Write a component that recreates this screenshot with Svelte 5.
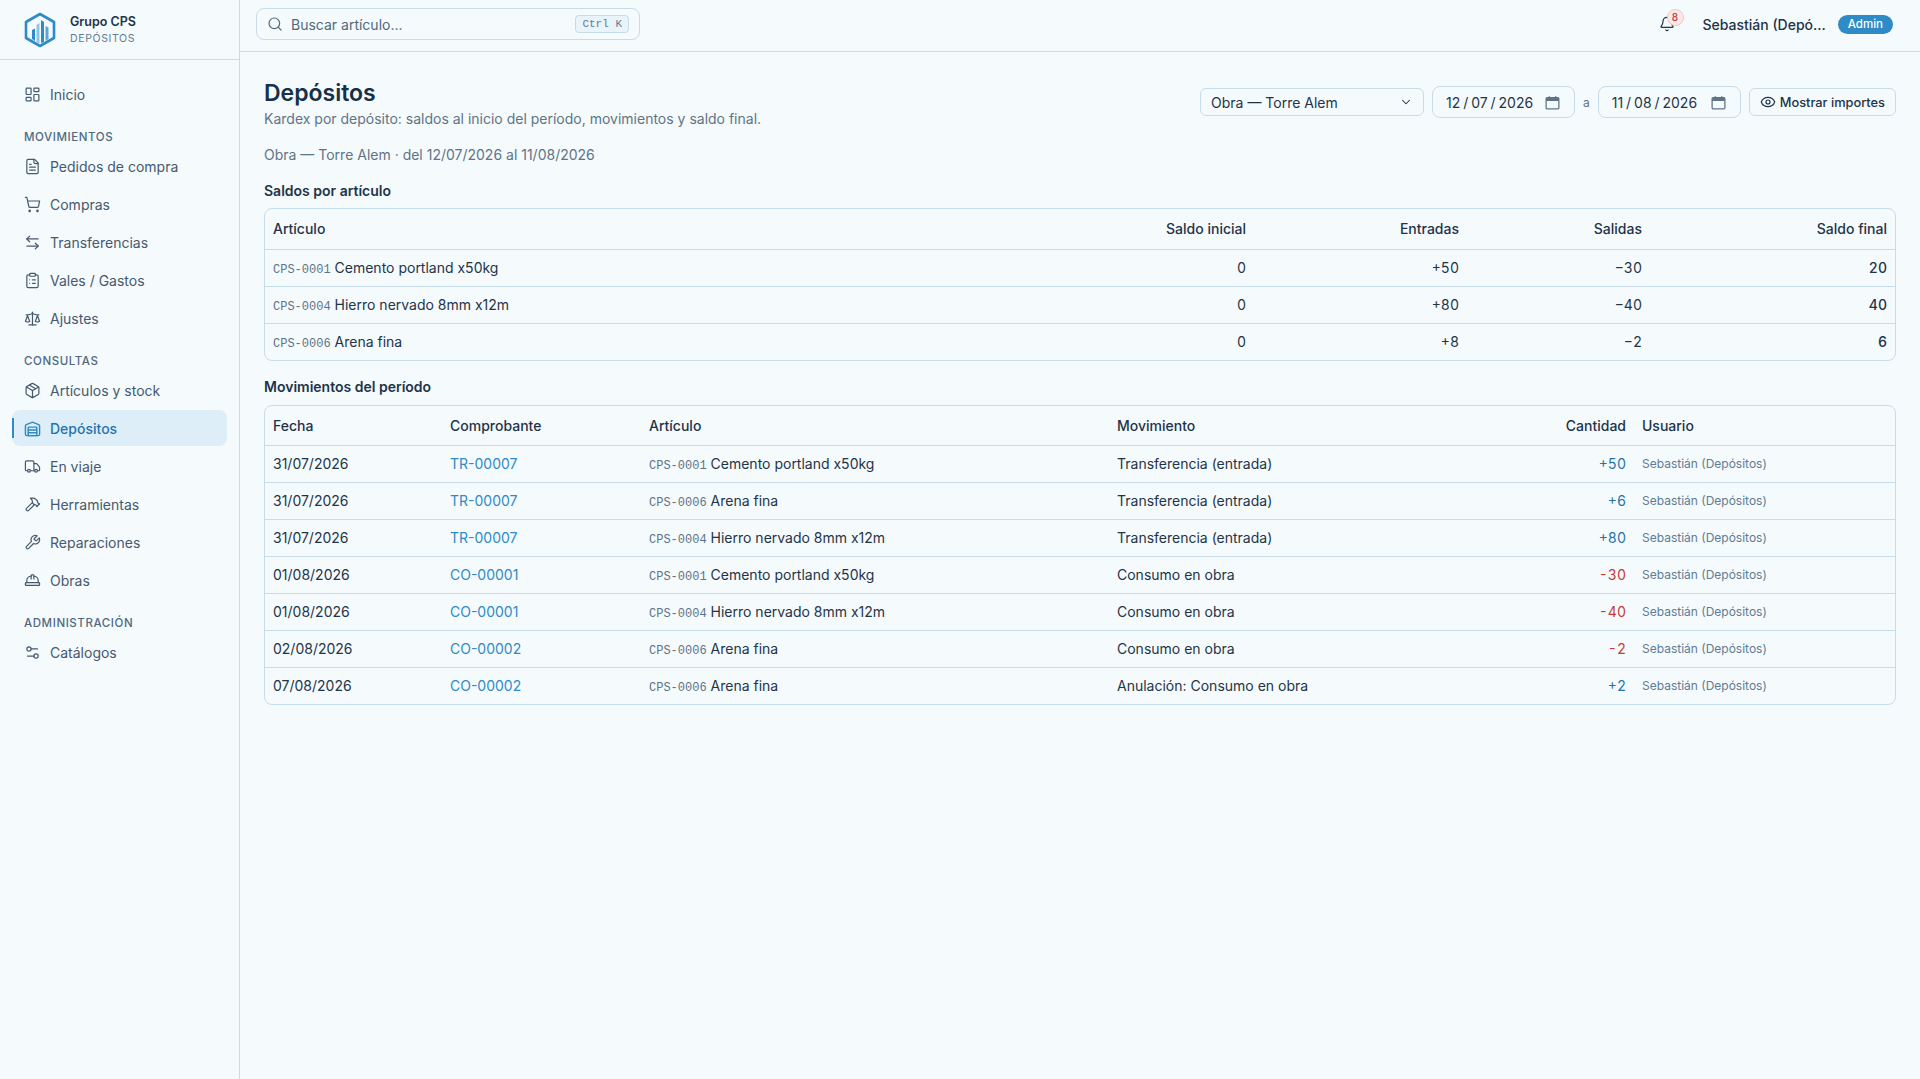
<script>
  const icons = {
    dash: '<rect x="3" y="3" width="7" height="9" rx="1"/><rect x="14" y="3" width="7" height="5" rx="1"/><rect x="14" y="12" width="7" height="9" rx="1"/><rect x="3" y="16" width="7" height="5" rx="1"/>',
    file: '<path d="M15 2H6a2 2 0 0 0-2 2v16a2 2 0 0 0 2 2h12a2 2 0 0 0 2-2V7Z"/><path d="M14 2v4a2 2 0 0 0 2 2h4"/><path d="M10 9H8"/><path d="M16 13H8"/><path d="M16 17H8"/>',
    cart: '<circle cx="8" cy="21" r="1"/><circle cx="19" cy="21" r="1"/><path d="M2.05 2.05h2l2.66 12.42a2 2 0 0 0 2 1.58h9.78a2 2 0 0 0 1.95-1.57l1.65-7.43H5.12"/>',
    swap: '<path d="M8 3 4 7l4 4"/><path d="M4 7h16"/><path d="m16 21 4-4-4-4"/><path d="M20 17H4"/>',
    clip: '<rect x="8" y="2" width="8" height="4" rx="1"/><path d="M16 4h2a2 2 0 0 1 2 2v14a2 2 0 0 1-2 2H6a2 2 0 0 1-2-2V6a2 2 0 0 1 2-2h2"/><path d="M12 11h4"/><path d="M12 16h4"/><path d="M8 11h.01"/><path d="M8 16h.01"/>',
    scale: '<path d="m16 16 3-8 3 8c-.87.65-1.92 1-3 1s-2.13-.35-3-1Z"/><path d="m2 16 3-8 3 8c-.87.65-1.92 1-3 1s-2.13-.35-3-1Z"/><path d="M7 21h10"/><path d="M12 3v18"/><path d="M3 7h2c2 0 5-1 7-2 2 1 5 2 7 2h2"/>',
    box: '<path d="m7.5 4.27 9 5.15"/><path d="M21 8a2 2 0 0 0-1-1.73l-7-4a2 2 0 0 0-2 0l-7 4A2 2 0 0 0 3 8v8a2 2 0 0 0 1 1.73l7 4a2 2 0 0 0 2 0l7-4A2 2 0 0 0 21 16Z"/><path d="m3.3 7 8.7 5 8.7-5"/><path d="M12 22V12"/>',
    store: '<path d="M22 8.35V20a2 2 0 0 1-2 2H4a2 2 0 0 1-2-2V8.35A2 2 0 0 1 3.26 6.5l8-3.2a2 2 0 0 1 1.48 0l8 3.2A2 2 0 0 1 22 8.35Z"/><path d="M6 18h12"/><path d="M6 14h12"/><rect x="6" y="10" width="12" height="12"/>',
    truck: '<path d="M14 18V6a2 2 0 0 0-2-2H4a2 2 0 0 0-2 2v11a1 1 0 0 0 1 1h2"/><path d="M15 18H9"/><path d="M19 18h2a1 1 0 0 0 1-1v-3.65a1 1 0 0 0-.22-.624l-3.48-4.35A1 1 0 0 0 17.52 8H14"/><circle cx="17" cy="18" r="2"/><circle cx="7" cy="18" r="2"/>',
    hammer: '<path d="m15 12-8.373 8.373a1 1 0 1 1-3-3L12 9"/><path d="m18 15 4-4"/><path d="m21.5 11.5-1.914-1.914A2 2 0 0 1 19 8.172V7l-2.26-2.26a6 6 0 0 0-4.202-1.756L9 2.96l.92.82A6.18 6.18 0 0 1 12 8.4V10l2 2h1.172a2 2 0 0 1 1.414.586L18.5 14.5"/>',
    wrench: '<path d="M14.7 6.3a1 1 0 0 0 0 1.4l1.6 1.6a1 1 0 0 0 1.4 0l3.77-3.77a6 6 0 0 1-7.94 7.94l-6.91 6.91a2.12 2.12 0 0 1-3-3l6.91-6.91a6 6 0 0 1 7.94-7.94l-3.76 3.76z"/>',
    hat: '<path d="M10 10V5a1 1 0 0 1 1-1h2a1 1 0 0 1 1 1v5"/><path d="M14 6a6 6 0 0 1 6 6v3"/><path d="M4 15v-3a6 6 0 0 1 6-6"/><rect x="2" y="15" width="20" height="4" rx="1"/>',
    sliders: '<path d="M14 17H5"/><path d="M19 7h-9"/><circle cx="17" cy="17" r="3"/><circle cx="7" cy="7" r="3"/>',
  };

  const nav = [
    { items: [{ label: "Inicio", icon: "dash" }] },
    {
      title: "Movimientos",
      items: [
        { label: "Pedidos de compra", icon: "file" },
        { label: "Compras", icon: "cart" },
        { label: "Transferencias", icon: "swap" },
        { label: "Vales / Gastos", icon: "clip" },
        { label: "Ajustes", icon: "scale" },
      ],
    },
    {
      title: "Consultas",
      items: [
        { label: "Artículos y stock", icon: "box" },
        { label: "Depósitos", icon: "store", active: true },
        { label: "En viaje", icon: "truck" },
        { label: "Herramientas", icon: "hammer" },
        { label: "Reparaciones", icon: "wrench" },
        { label: "Obras", icon: "hat" },
      ],
    },
    { title: "Administración", items: [{ label: "Catálogos", icon: "sliders" }] },
  ];

  const saldos = [
    { code: "CPS-0001", name: "Cemento portland x50kg", ini: "0", ent: "+50", sal: "−30", fin: "20" },
    { code: "CPS-0004", name: "Hierro nervado 8mm x12m", ini: "0", ent: "+80", sal: "−40", fin: "40" },
    { code: "CPS-0006", name: "Arena fina", ini: "0", ent: "+8", sal: "−2", fin: "6" },
  ];

  const user = "Sebastián (Depósitos)";
  const movs = [
    { date: "31/07/2026", doc: "TR-00007", code: "CPS-0001", name: "Cemento portland x50kg", mov: "Transferencia (entrada)", qty: "+50" },
    { date: "31/07/2026", doc: "TR-00007", code: "CPS-0006", name: "Arena fina", mov: "Transferencia (entrada)", qty: "+6" },
    { date: "31/07/2026", doc: "TR-00007", code: "CPS-0004", name: "Hierro nervado 8mm x12m", mov: "Transferencia (entrada)", qty: "+80" },
    { date: "01/08/2026", doc: "CO-00001", code: "CPS-0001", name: "Cemento portland x50kg", mov: "Consumo en obra", qty: "-30" },
    { date: "01/08/2026", doc: "CO-00001", code: "CPS-0004", name: "Hierro nervado 8mm x12m", mov: "Consumo en obra", qty: "-40" },
    { date: "02/08/2026", doc: "CO-00002", code: "CPS-0006", name: "Arena fina", mov: "Consumo en obra", qty: "-2" },
    { date: "07/08/2026", doc: "CO-00002", code: "CPS-0006", name: "Arena fina", mov: "Anulación: Consumo en obra", qty: "+2" },
  ];
</script>

<div class="shell">
  <aside class="sidebar">
    <div class="brand">
      <svg class="logo" viewBox="0 0 32 36" width="32" height="36" aria-hidden="true">
        <path d="M16 2 30 10v16L16 34 2 26V10Z" fill="none" stroke="#2e8bc5" stroke-width="2.6" stroke-linejoin="round" />
        <path d="M8 27V18l3-1.5V29Z" fill="#2e8bc5" />
        <path d="M12.5 30V13l3-2v20.5Z" fill="#8cc3e6" />
        <path d="M17 31V8l3 2v20Z" fill="#2e8bc5" />
        <path d="M21.5 29V14l3 1.5V27Z" fill="#5ba6d6" />
      </svg>
      <div>
        <div class="brand-name">Grupo CPS</div>
        <div class="brand-sub">DEPÓSITOS</div>
      </div>
    </div>
    <nav class="nav">
      {#each nav as group}
        {#if group.title}
          <div class="nav-title">{group.title}</div>
        {/if}
        {#each group.items as item}
          <div class="nav-item" class:active={item.active}>
            <svg class="nav-icon" viewBox="0 0 24 24" width="17" height="17" aria-hidden="true">{@html icons[item.icon]}</svg>
            <span>{item.label}</span>
          </div>
        {/each}
      {/each}
    </nav>
  </aside>

  <div class="content">
    <header class="topbar">
      <div class="search">
        <svg class="stroke" viewBox="0 0 24 24" width="16" height="16" aria-hidden="true"><path d="m21 21-4.34-4.34" /><circle cx="11" cy="11" r="8" /></svg>
        <span class="search-text">Buscar artículo...</span>
        <kbd>Ctrl K</kbd>
      </div>
      <div class="top-right">
        <div class="bell">
          <svg class="stroke" viewBox="0 0 24 24" width="16" height="16" aria-hidden="true"><path d="M10.268 21a2 2 0 0 0 3.464 0" /><path d="M3.262 15.326A1 1 0 0 0 4 17h16a1 1 0 0 0 .74-1.673C19.41 13.956 18 12.499 18 8A6 6 0 0 0 6 8c0 4.499-1.411 5.956-2.738 7.326" /></svg>
          <span class="bell-count">8</span>
        </div>
        <span class="user">Sebastián (Depó...</span>
        <span class="role">Admin</span>
      </div>
    </header>

    <main class="page">
      <div class="page-head">
        <div>
          <h1>Depósitos</h1>
          <p class="lead">Kardex por depósito: saldos al inicio del período, movimientos y saldo final.</p>
        </div>
        <div class="filters">
          <div class="select">
            <span>Obra — Torre Alem</span>
            <svg class="stroke" viewBox="0 0 24 24" width="14" height="14" aria-hidden="true"><path d="m6 9 6 6 6-6" /></svg>
          </div>
          <div class="date">
            <span>12 / 07 / 2026</span>
            <svg viewBox="0 0 16 16" width="17" height="17" aria-hidden="true"><path d="M3 3.5h10a1 1 0 0 1 1 1V13a1 1 0 0 1-1 1H3a1 1 0 0 1-1-1V4.5a1 1 0 0 1 1-1Z" fill="none" stroke="#5f7486" stroke-width="1.2" /><path d="M2 4.5a1 1 0 0 1 1-1h10a1 1 0 0 1 1 1V6.5H2Z" fill="#5f7486" /><path d="M5 2v2M11 2v2" stroke="#5f7486" stroke-width="1.3" /></svg>
          </div>
          <span class="sep">a</span>
          <div class="date">
            <span>11 / 08 / 2026</span>
            <svg viewBox="0 0 16 16" width="17" height="17" aria-hidden="true"><path d="M3 3.5h10a1 1 0 0 1 1 1V13a1 1 0 0 1-1 1H3a1 1 0 0 1-1-1V4.5a1 1 0 0 1 1-1Z" fill="none" stroke="#5f7486" stroke-width="1.2" /><path d="M2 4.5a1 1 0 0 1 1-1h10a1 1 0 0 1 1 1V6.5H2Z" fill="#5f7486" /><path d="M5 2v2M11 2v2" stroke="#5f7486" stroke-width="1.3" /></svg>
          </div>
          <button class="btn" type="button">
            <svg class="stroke" viewBox="0 0 24 24" width="16" height="16" aria-hidden="true"><path d="M2.062 12.348a1 1 0 0 1 0-.696 10.75 10.75 0 0 1 19.876 0 1 1 0 0 1 0 .696 10.75 10.75 0 0 1-19.876 0" /><circle cx="12" cy="12" r="3" /></svg>
            Mostrar importes
          </button>
        </div>
      </div>

      <p class="context">Obra — Torre Alem · del 12/07/2026 al 11/08/2026</p>

      <h2>Saldos por artículo</h2>
      <div class="table-wrap">
        <table class="saldos">
          <colgroup><col style="width:640px" /><col style="width:349px" /><col style="width:213px" /><col style="width:183px" /><col style="width:245px" /></colgroup>
          <thead>
            <tr><th>Artículo</th><th class="num">Saldo inicial</th><th class="num">Entradas</th><th class="num">Salidas</th><th class="num">Saldo final</th></tr>
          </thead>
          <tbody>
            {#each saldos as row}
              <tr>
                <td><span class="code">{row.code}</span> {row.name}</td>
                <td class="num">{row.ini}</td>
                <td class="num">{row.ent}</td>
                <td class="num">{row.sal}</td>
                <td class="num strong">{row.fin}</td>
              </tr>
            {/each}
          </tbody>
        </table>
      </div>

      <h2 class="second">Movimientos del período</h2>
      <div class="table-wrap">
        <table class="movs">
          <colgroup><col style="width:177px" /><col style="width:199px" /><col style="width:468px" /><col style="width:360px" /><col style="width:165px" /><col style="width:261px" /></colgroup>
          <thead>
            <tr><th>Fecha</th><th>Comprobante</th><th>Artículo</th><th>Movimiento</th><th class="num">Cantidad</th><th>Usuario</th></tr>
          </thead>
          <tbody>
            {#each movs as row}
              <tr>
                <td>{row.date}</td>
                <td class="link">{row.doc}</td>
                <td><span class="code">{row.code}</span> {row.name}</td>
                <td>{row.mov}</td>
                <td class="num" class:neg={row.qty.startsWith("-")} class:pos={row.qty.startsWith("+")}>{row.qty}</td>
                <td class="who">{user}</td>
              </tr>
            {/each}
          </tbody>
        </table>
      </div>
    </main>
  </div>
</div>

<style>
  :global(body) {
    margin: 0;
    background: #f5fafd;
    font-family: Inter, "Noto Sans", sans-serif;
    color: #1e3448;
  }
  .shell {
    display: flex;
    min-height: 1079px;
  }
  .sidebar {
    width: 239px;
    flex: none;
    border-right: 1px solid #c7dcea;
  }
  .brand {
    height: 59px;
    display: flex;
    align-items: center;
    gap: 14px;
    padding-left: 24px;
    border-bottom: 1px solid #c7dcea;
  }
  .brand-name {
    font-size: 12.5px;
    font-weight: 600;
    line-height: 17px;
  }
  .brand-sub {
    font-size: 10.5px;
    letter-spacing: 0.06em;
    color: #5f7c93;
    line-height: 17px;
  }
  .nav {
    padding: 16px 12px;
  }
  .nav-title {
    margin: 17px 0 3px;
    padding-left: 12px;
    font-size: 11.5px;
    font-weight: 500;
    letter-spacing: 0.05em;
    line-height: 16px;
    color: #4f6a80;
    text-transform: uppercase;
  }
  .nav-item {
    position: relative;
    height: 36px;
    margin-bottom: 2px;
    display: flex;
    align-items: center;
    gap: 9px;
    padding-left: 12px;
    border-radius: 8px;
    font-size: 14px;
    color: #46596d;
  }
  .nav-icon {
    fill: none;
    stroke: currentColor;
    stroke-width: 1.7;
    stroke-linecap: round;
    stroke-linejoin: round;
  }
  .nav-item.active {
    background: #deeef8;
    color: #1f74ad;
    font-weight: 500;
  }
  .nav-item.active .nav-icon {
    color: #2e8bc5;
    stroke-width: 2;
  }
  .nav-item.active::before {
    content: "";
    position: absolute;
    left: 0;
    top: 8px;
    bottom: 8px;
    width: 2px;
    background: #2e8bc5;
  }
  .content {
    flex: 1;
    min-width: 0;
  }
  .topbar {
    height: 48px;
    display: flex;
    align-items: center;
    justify-content: space-between;
    padding: 0 27px 3px 16px;
    border-bottom: 1px solid #c7dcea;
  }
  .search {
    width: 384px;
    height: 32px;
    box-sizing: border-box;
    display: flex;
    align-items: center;
    gap: 8px;
    padding: 0 10px;
    border: 1px solid #c7dcea;
    border-radius: 8px;
    color: #4f6a80;
  }
  .search-text {
    flex: 1;
    font-size: 14px;
  }
  kbd {
    font-family: "Liberation Mono", monospace;
    font-size: 11px;
    color: #5f7c93;
    background: #e9f3fa;
    border: 1px solid #c7dcea;
    border-radius: 4px;
    padding: 2px 6px;
  }
  .stroke {
    fill: none;
    stroke: currentColor;
    stroke-width: 1.8;
    stroke-linecap: round;
    stroke-linejoin: round;
  }
  .top-right {
    display: flex;
    align-items: center;
  }
  .bell {
    position: relative;
    display: flex;
    margin-right: 28px;
    color: #1e3448;
  }
  .bell-count {
    position: absolute;
    top: -7px;
    left: 8px;
    width: 17px;
    height: 17px;
    box-sizing: border-box;
    border: 1px solid #f0c4c2;
    border-radius: 50%;
    background: #fde8e7;
    color: #c53a36;
    font-size: 10px;
    font-weight: 500;
    line-height: 15px;
    text-align: center;
  }
  .user {
    font-size: 14px;
    font-weight: 500;
    margin-right: 12px;
  }
  .role {
    background: #2e8bc5;
    color: #fff;
    border-radius: 10px;
    font-size: 11.5px;
    font-weight: 500;
    line-height: 19px;
    padding: 0 10px;
  }
  .page {
    padding: 27px 24px 24px;
  }
  .page-head {
    display: flex;
    justify-content: space-between;
    align-items: flex-start;
  }
  h1 {
    margin: 0;
    font-size: 23px;
    font-weight: 600;
    line-height: 28px;
    color: #16304a;
  }
  .lead {
    margin: 2px 0 0;
    font-size: 14px;
    line-height: 20px;
    color: #5f7486;
  }
  .filters {
    display: flex;
    align-items: center;
    gap: 8px;
    margin-top: 7px;
    font-size: 14px;
  }
  .select {
    width: 224px;
    height: 28px;
    box-sizing: border-box;
    display: flex;
    align-items: center;
    justify-content: space-between;
    padding: 0 10px;
    border: 1px solid #c7dcea;
    border-radius: 6px;
    color: #1e3448;
  }
  .date {
    width: 143px;
    height: 32px;
    box-sizing: border-box;
    display: flex;
    align-items: center;
    justify-content: space-between;
    padding: 0 13px;
    border: 1px solid #c7dcea;
    border-radius: 8px;
    font-size: 14px;
    word-spacing: -1px;
  }
  .sep {
    font-size: 12px;
    color: #5f7486;
  }
  .btn {
    height: 28px;
    box-sizing: border-box;
    display: flex;
    align-items: center;
    gap: 4px;
    padding: 0 10px;
    border: 1px solid #c7dcea;
    border-radius: 6px;
    background: transparent;
    font: 500 12.8px Inter, sans-serif;
    color: #1e3448;
  }
  .context {
    margin: 16px 0 0;
    font-size: 14px;
    line-height: 20px;
    color: #5f7486;
  }
  h2 {
    margin: 16px 0 7px;
    font-size: 14px;
    font-weight: 600;
    line-height: 20px;
    color: #1e3448;
  }
  h2.second {
    margin-bottom: 8px;
  }
  .table-wrap {
    border: 1px solid #c7dcea;
    border-radius: 8px;
    overflow: hidden;
  }
  table {
    width: 100%;
    table-layout: fixed;
    border-collapse: collapse;
    font-size: 14px;
    line-height: 20px;
  }
  th {
    height: 40px;
    padding: 0 8px;
    font-weight: 500;
    text-align: left;
    color: #1e3448;
  }
  td {
    height: 36px;
    padding: 0 8px;
    border-top: 1px solid #c7dcea;
    color: #1e3448;
  }
  .movs th {
    height: 39px;
  }
  .num {
    text-align: right;
    font-variant-numeric: tabular-nums;
  }
  .strong {
    font-weight: 500;
  }
  .code {
    font-family: "Liberation Mono", monospace;
    font-size: 12px;
    line-height: 1;
    color: #5f7486;
  }
  .link {
    color: #2e8bc5;
  }
  .who {
    font-size: 12px;
    color: #5f7c93;
  }
  .pos {
    color: #1f74ad;
  }
  .neg {
    color: #c53a36;
  }
</style>
